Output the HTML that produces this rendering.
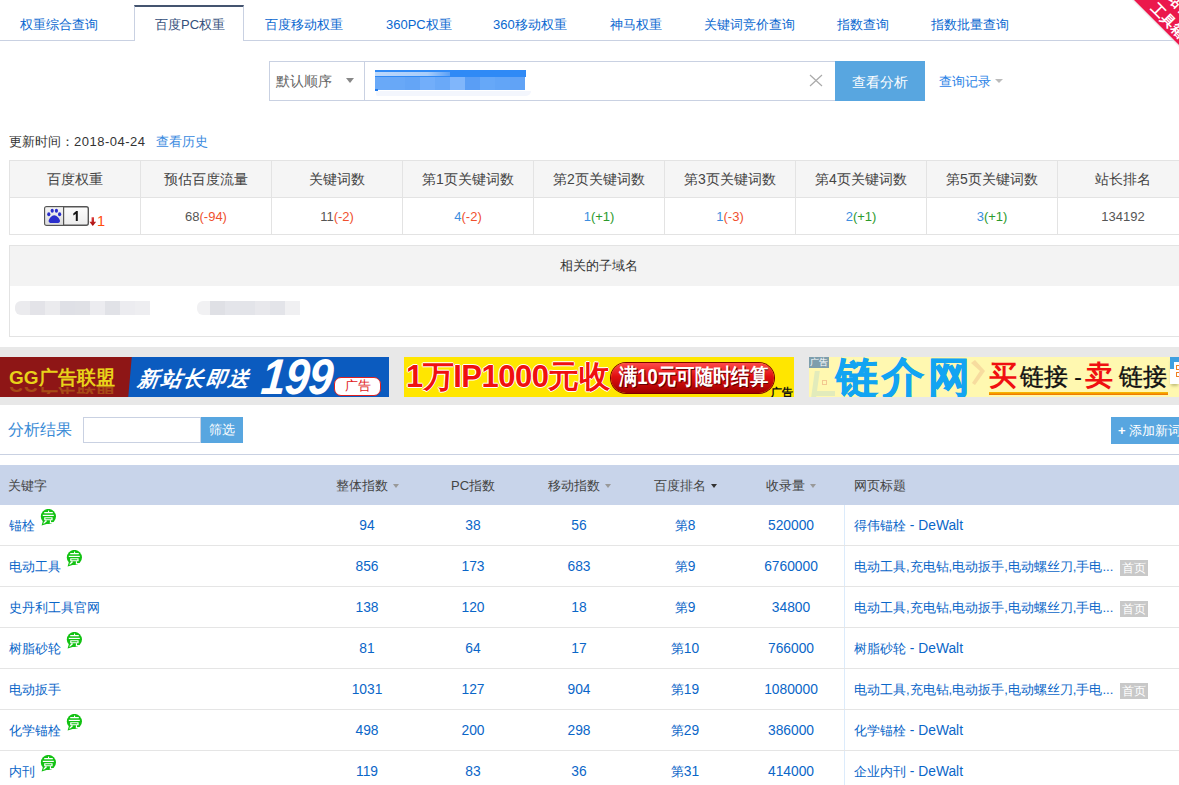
<!DOCTYPE html>
<html><head><meta charset="utf-8">
<style>
*{margin:0;padding:0;box-sizing:border-box}
html,body{width:1179px;height:785px;overflow:hidden;background:#fff}
body{font-family:"Liberation Sans",sans-serif;font-size:13px;color:#333;position:relative}
.a{position:absolute;white-space:nowrap}
.tabline{position:absolute;left:0;top:40px;width:1179px;height:1px;background:#c9d1e2}
.tab{position:absolute;top:16px;line-height:18px;font-size:13px;color:#0a68d0}
.acttab{position:absolute;left:134px;top:5px;width:110px;height:36px;background:#fff;border-left:1px solid #c9d1e2;border-right:1px solid #c9d1e2;border-top:2px solid #44546f}
.ribbon{position:absolute;left:1134px;top:0;width:45px;height:45px;overflow:hidden}
.sel{position:absolute;left:269px;top:61px;width:96px;height:40px;border:1px solid #c9d1e2;background:#fff}
.inp{position:absolute;left:364px;top:61px;width:472px;height:40px;border:1px solid #c9d1e2;background:#fff}
.btn{position:absolute;left:835px;top:61px;width:90px;height:40px;background:#58a6e0;color:#fff;font-size:14px;text-align:center;line-height:42px}
.t1{position:absolute;left:9px;top:160px;width:1180px;border-collapse:collapse;table-layout:fixed}
.t1 td{border:1px solid #e3e3e3;text-align:center;width:131px}
.t1 tr.h td{height:37px;background:#f5f5f5;font-size:14px;color:#444;padding-top:2px}
.t1 tr.b td{height:37px;font-size:13px;color:#555}
.blue{color:#3d8ee0}.red{color:#f0502e}.green{color:#2c9a2c}
.sub{position:absolute;left:9px;top:245px;width:1180px;height:92px;border:1px solid #e3e3e3}
.subh{height:40px;background:#f3f3f3;text-align:center;line-height:40px;font-size:13px;color:#333}
.strip{position:absolute;left:0;top:347px;width:1179px;height:58px;background:#e8e8e8}
.t2h{position:absolute;left:0;top:465px;width:1179px;height:40px;background:#c8d4ea}
.row{position:absolute;left:0;width:1179px;height:41px;border-bottom:1px solid #e5e5e5}
.cell{position:absolute;top:0;line-height:41px;text-align:center;color:#0a66c8;font-size:13px}
.n{font-size:13.8px}
.hc{position:absolute;top:1px;line-height:40px;text-align:center;color:#444;font-size:13px}
.arr{display:inline-block;width:0;height:0;border-left:3px solid transparent;border-right:3px solid transparent;border-top:4px solid #999;vertical-align:middle;margin-left:5px;margin-top:-2px}
.jing{position:absolute;margin-left:5px;margin-top:4px;width:17px;height:18px}
.shou{display:inline-block;background:#c8c8c8;color:#fff;font-size:12px;line-height:16px;padding:0 2px;margin-left:7px;vertical-align:middle}
</style></head><body>

<svg width="0" height="0" style="position:absolute"><defs><symbol id="jg" viewBox="0 0 17 18">
<circle cx="8.4" cy="7.5" r="7.6" fill="#12c212"/>
<path d="M3.2 11 L1.6 16.6 L11.5 13.6Z" fill="#12c212"/>
<g fill="#fff">
<rect x="8" y="1.6" width="1.1" height="1.4"/>
<rect x="4.2" y="3" width="8.6" height="1.3"/>
<rect x="2.8" y="5.8" width="11" height="1.2"/>
<path d="M4.2 8.2h8.4v3h-8.4z M5.4 9.2v1h6v-1z" fill-rule="evenodd"/>
<path d="M5.5 11.2h1.2v1.2l-2.4 2.2h-1.3z"/>
<rect x="9.9" y="11.2" width="1.1" height="2.8"/>
<rect x="9.9" y="13.1" width="3.9" height="1.1"/>
</g></symbol></defs></svg>
<!-- tabs -->
<div class="tabline"></div>
<div class="acttab"></div>
<div class="tab" style="left:20px">权重综合查询</div>
<div class="tab" style="left:155px;color:#35507c">百度PC权重</div>
<div class="tab" style="left:265px">百度移动权重</div>
<div class="tab" style="left:386px">360PC权重</div>
<div class="tab" style="left:493px">360移动权重</div>
<div class="tab" style="left:610px">神马权重</div>
<div class="tab" style="left:704px">关键词竞价查询</div>
<div class="tab" style="left:837px">指数查询</div>
<div class="tab" style="left:931px">指数批量查询</div>

<!-- ribbon -->
<svg class="a" style="left:1120px;top:0" width="59" height="60" viewBox="1120 0 59 60">
<polygon points="1133,-1 1180,46 1180,48 1131,-1" fill="#dde3e3" opacity=".6"/>
<polygon points="1134,0 1179,0 1179,45" fill="#eb184c"/>
<g font-family="Liberation Sans, sans-serif" font-size="14" font-weight="bold" fill="#fff" text-anchor="middle">
<text transform="translate(1168,20.5) rotate(45)" y="4.5">工具箱</text>
<text transform="translate(1180,6) rotate(45)" y="4.5">站长</text>
</g></svg>

<!-- search -->
<div class="sel"></div>
<div class="a" style="left:276px;top:72px;line-height:18px;font-size:14px;color:#666">默认顺序</div>
<div class="a" style="left:346px;top:78px;width:0;height:0;border-left:4px solid transparent;border-right:4px solid transparent;border-top:5px solid #888"></div>
<div class="inp"></div>
<div class="a" style="left:376px;top:91px;width:155px;height:5px;background:#f3f6fd;border-radius:0 0 6px 2px"></div>
<div class="a" style="left:375px;top:70px;width:151px;height:7px;background:#2f8af6"></div>
<div class="a" style="left:375px;top:72px;width:75px;height:4px;background:linear-gradient(90deg,#bcd8fb,#a9cdfa 70%,#5aa0f6)"></div>
<div class="a" style="left:375px;top:77px;width:15px;height:13px;background:#69a9f8"></div>
<div class="a" style="left:390px;top:77px;width:15px;height:13px;background:#68a8f7"></div>
<div class="a" style="left:405px;top:77px;width:15px;height:13px;background:#64a5f6"></div>
<div class="a" style="left:420px;top:77px;width:15px;height:13px;background:#72aefa"></div>
<div class="a" style="left:435px;top:77px;width:15px;height:13px;background:#6aa9f8"></div>
<div class="a" style="left:450px;top:77px;width:15px;height:13px;background:#80b6fb"></div>
<div class="a" style="left:465px;top:77px;width:15px;height:13px;background:#5a9ef5"></div>
<div class="a" style="left:480px;top:77px;width:15px;height:13px;background:#66a8f8"></div>
<div class="a" style="left:495px;top:77px;width:15px;height:13px;background:#62a5f7"></div>
<div class="a" style="left:510px;top:77px;width:15px;height:13px;background:#61a3f6"></div>
<div class="a" style="left:375px;top:89px;width:3px;height:2px;background:#1f7cf0"></div>

<svg class="a" style="left:809px;top:74px" width="14" height="13"><path d="M1 1L13 12M13 1L1 12" stroke="#aaa" stroke-width="1.2" fill="none"/></svg>
<div class="btn">查看分析</div>
<div class="a" style="left:939px;top:73px;line-height:18px;color:#2a82e6">查询记录</div>
<div class="a" style="left:995px;top:79px;width:0;height:0;border-left:4px solid transparent;border-right:4px solid transparent;border-top:4px solid #bbb"></div>

<!-- update -->
<div class="a" style="left:9px;top:133px;line-height:18px;color:#333">更新时间：<span style="letter-spacing:0.5px">2018-04-24</span></div>
<div class="a" style="left:156px;top:133px;line-height:18px;color:#3a8ae0">查看历史</div>

<table class="t1">
<tr class="h"><td>百度权重</td><td>预估百度流量</td><td>关键词数</td><td>第1页关键词数</td><td>第2页关键词数</td><td>第3页关键词数</td><td>第4页关键词数</td><td>第5页关键词数</td><td>站长排名</td></tr>
<tr class="b"><td></td><td>68<span class="red">(-94)</span></td><td>11<span class="red">(-2)</span></td><td><span class="blue">4</span><span class="red">(-2)</span></td><td><span class="blue">1</span><span class="green">(+1)</span></td><td><span class="blue">1</span><span class="red">(-3)</span></td><td><span class="blue">2</span><span class="green">(+1)</span></td><td><span class="blue">3</span><span class="green">(+1)</span></td><td>134192</td></tr>
</table>
<!-- baidu badge -->
<svg class="a" style="left:43px;top:205px" width="64" height="24" viewBox="43 205 64 24">
<defs><linearGradient id="bg1" x1="0" y1="0" x2="0" y2="1"><stop offset="0" stop-color="#f4f4f4"/><stop offset="1" stop-color="#dcdcdc"/></linearGradient>
<linearGradient id="bg2" x1="0" y1="0" x2="0" y2="1"><stop offset="0" stop-color="#fdfdfd"/><stop offset="1" stop-color="#ececec"/></linearGradient>
<linearGradient id="ar" x1="0" y1="0" x2="0" y2="1"><stop offset="0" stop-color="#e04040"/><stop offset="1" stop-color="#a00808"/></linearGradient></defs>
<rect x="44.7" y="206.7" width="43.6" height="18.6" rx="2" fill="url(#bg2)" stroke="#555" stroke-width="1.4"/>
<rect x="45.4" y="207.4" width="18" height="17.2" fill="url(#bg1)"/>
<line x1="63.6" y1="207" x2="63.6" y2="225" stroke="#555" stroke-width="1.2"/>
<g fill="#2b2fcc">
<ellipse cx="48.8" cy="214.3" rx="1.6" ry="2"/>
<ellipse cx="52.2" cy="210.8" rx="1.6" ry="2"/>
<ellipse cx="56.4" cy="210.8" rx="1.6" ry="2"/>
<ellipse cx="59.6" cy="214.3" rx="1.6" ry="2"/>
<path d="M54.2 215.3 C52 215.3 48.6 219 48.6 221 C48.6 222.6 50 223 51 223 L57.6 223 C58.6 223 60 222.6 60 221 C60 219 56.6 215.3 54.2 215.3Z"/>
</g>
<path d="M73.3 213.6 L76.2 211 H77.8 V221 H75.8 V213.9 L73.3 215.6Z" fill="#151515"/>
<path d="M91.6 217.2 h2.4 v4.6 h2.2 l-3.4 4.2 l-3.4 -4.2 h2.2z" fill="url(#ar)"/>
<text x="97" y="226" font-family="Liberation Sans, sans-serif" font-size="14.5" fill="#ff4a0a">1</text>
</svg>

<div class="sub"><div class="subh">相关的子域名</div></div>
<div class="a" style="left:15px;top:301px;width:15px;height:14px;background:#ebebee;border-radius:6px 0 0 6px;"></div>
<div class="a" style="left:30px;top:301px;width:15px;height:14px;background:#e3e3e8;"></div>
<div class="a" style="left:45px;top:301px;width:15px;height:14px;background:#ebebee;"></div>
<div class="a" style="left:60px;top:301px;width:15px;height:14px;background:#dfe0e6;"></div>
<div class="a" style="left:75px;top:301px;width:15px;height:14px;background:#e0e1e6;"></div>
<div class="a" style="left:90px;top:301px;width:15px;height:14px;background:#ececf0;"></div>
<div class="a" style="left:105px;top:301px;width:15px;height:14px;background:#e1e2e7;"></div>
<div class="a" style="left:120px;top:301px;width:15px;height:14px;background:#ececf0;"></div>
<div class="a" style="left:135px;top:301px;width:15px;height:14px;background:#eeeef1;"></div>
<div class="a" style="left:197px;top:301px;width:13px;height:14px;background:#f1f1f3;border-radius:6px 0 0 6px;"></div>
<div class="a" style="left:210px;top:301px;width:15px;height:14px;background:#dfe0e5;"></div>
<div class="a" style="left:225px;top:301px;width:15px;height:14px;background:#e4e5ea;"></div>
<div class="a" style="left:240px;top:301px;width:15px;height:14px;background:#e3e4e9;"></div>
<div class="a" style="left:255px;top:301px;width:15px;height:14px;background:#e8e8ec;"></div>
<div class="a" style="left:270px;top:301px;width:15px;height:14px;background:#e3e4e9;"></div>
<div class="a" style="left:285px;top:301px;width:15px;height:14px;background:#f0f0f2;"></div>


<!-- banners -->
<div class="strip"></div>
<div class="a" style="left:0;top:357px;width:389px;height:40px;background:#0b5bbf;overflow:hidden">
 <div class="a" style="left:-10px;top:0;width:140px;height:40px;background:#8e1616;transform:skewX(-5deg)"></div>
 <div class="a" style="left:9px;top:10px;font-size:19px;line-height:22px;font-weight:900;color:#e8d21a;letter-spacing:0px">GG广告联盟</div>
 <div class="a" style="left:9px;top:30px;width:105px;height:7px;overflow:hidden;opacity:.28"><div style="position:absolute;left:0;top:-13px;font-size:19px;line-height:22px;font-weight:bold;color:#e8d21a;transform:scaleY(-1)">GG广告联盟</div></div>
 <div class="a" style="left:138px;top:10px;font-size:21px;line-height:24px;font-weight:900;font-style:italic;color:#fff;letter-spacing:1.5px;transform:skewX(-8deg)">新站长即送</div>
 <div class="a" style="left:264px;top:-5px;font-size:50px;line-height:50px;font-weight:bold;font-style:italic;color:#fff;transform:scaleX(0.88) skewX(-6deg);transform-origin:0 0;letter-spacing:-1px">199</div>
 <div class="a" style="left:334px;top:20px;width:47px;height:19px;background:#fff;border:1.5px solid #e02020;border-radius:7px;color:#e02020;font-size:13px;line-height:16px;text-align:center">广告</div>
</div>
<div class="a" style="left:404px;top:357px;width:390px;height:40px;background:#ffe600;overflow:hidden">
 <div class="a" style="left:2px;top:2px;font-size:31px;line-height:36px;font-weight:bold;color:#f01010;letter-spacing:-0.5px;-webkit-text-stroke:0px;text-shadow:1px 0 #fff,-1px 0 #fff,0 1px #fff,0 -1px #fff">1万IP1000元收</div>
 <div class="a" style="left:207px;top:5.5px;width:163px;height:30px;border-radius:15px;background:linear-gradient(#ff4a4a,#e01010 45%,#a00000);box-shadow:0 0 0 1px #7a0000"></div>
 <div class="a" style="left:215px;top:7px;font-size:22px;line-height:26px;font-weight:bold;color:#fff;text-shadow:1px 1px #600;transform:scaleX(0.835);transform-origin:0 0">满10元可随时结算</div>
 <div class="a" style="left:367px;top:29px;font-size:11px;line-height:12px;font-weight:bold;color:#111">广告</div>
</div>
<div class="a" style="left:809px;top:357px;width:370px;height:40px;background:#fff8b0;overflow:hidden">
 <div class="a" style="left:4px;top:14px;width:5px;height:26px;background:#e2ebbb;transform:skewX(-8deg)"></div>
 <div class="a" style="left:4px;top:34px;width:22px;height:5px;background:#e2ebbb"></div>
 <div class="a" style="left:13px;top:23px;width:5px;height:5px;border:1px solid #f3c890"></div>
 <svg class="a" style="left:160px;top:2px" width="18" height="28"><path d="M2 4 L6 1 L16 12 L6 26 L3 24 L11 12Z" fill="#f5d49a" opacity=".8"/></svg>
 <div class="a" style="left:0;top:0;width:20px;height:11px;background:#7e9eac;color:#fff;font-size:9px;line-height:11px;text-align:center">广告</div>
 <div class="a" style="left:27px;top:-1px;font-size:42px;line-height:44px;font-weight:900;color:#12a4f2;letter-spacing:4px;-webkit-text-stroke:0.8px #12a4f2">链介网</div>
 <div class="a" style="left:180px;top:3px;font-size:28px;line-height:32px;font-weight:bold;color:#f01010">买</div>
 <div class="a" style="left:211px;top:5px;font-size:24px;line-height:30px;color:#111;-webkit-text-stroke:0.4px #111">链接</div>
 <div class="a" style="left:265px;top:5px;font-size:24px;line-height:30px;color:#111">-</div>
 <div class="a" style="left:276px;top:3px;font-size:28px;line-height:32px;font-weight:bold;color:#f01010">卖</div>
 <div class="a" style="left:310px;top:5px;font-size:24px;line-height:30px;color:#111;-webkit-text-stroke:0.4px #111">链接</div>
 <div class="a" style="left:180px;top:35px;width:179px;height:3px;background:linear-gradient(#f8c000,#f07000)"></div>
</div>
<div class="a" style="left:1170px;top:357px;width:9px;height:27px;background:#fff;border-top:5px solid #3fa0e0;box-shadow:0 3px 3px -1px rgba(120,120,60,.45)"></div><div class="a" style="left:1170px;top:357px;width:4px;height:12px;background:#3fa0e0"></div><div class="a" style="left:1176px;top:365px;width:5px;height:5px;border:1.5px solid #f08020"></div><div class="a" style="left:1176px;top:372px;width:5px;height:5px;border:1.5px solid #f08020"></div>
<!-- analysis -->
<div class="a" style="left:8px;top:420px;line-height:20px;font-size:16px;color:#3a8bd6">分析结果</div>
<div class="a" style="left:83px;top:417px;width:118px;height:26px;border:1px solid #c9d1e2"></div>
<div class="a" style="left:201px;top:417px;width:42px;height:26px;background:#58a6e0;color:#fff;font-size:13px;line-height:26px;text-align:center">筛选</div>
<div class="a" style="left:1111px;top:417px;width:80px;height:27px;background:#58a6e0;color:#fff;font-size:13px;line-height:27px;padding-left:7px"><b>+</b> 添加新词</div>
<div class="a" style="left:0;top:454px;width:1179px;height:1px;background:#c9d1e2"></div>

<!-- table 2 -->
<div class="t2h">
<div class="hc" style="left:8px;text-align:left">关键字</div>
<div class="hc" style="left:314px;width:106px">整体指数<i class="arr"></i></div>
<div class="hc" style="left:420px;width:106px">PC指数</div>
<div class="hc" style="left:526px;width:106px">移动指数<i class="arr"></i></div>
<div class="hc" style="left:632px;width:106px">百度排名<i class="arr" style="border-top-color:#333"></i></div>
<div class="hc" style="left:738px;width:106px">收录量<i class="arr"></i></div>
<div class="hc" style="left:854px;text-align:left">网页标题</div>
</div>
<div class="a" style="left:844px;top:505px;width:1px;height:280px;background:#dcebfb"></div>

<div id="rows">
<div class="row" style="top:505px"><div class="cell" style="left:9px;text-align:left">锚栓<svg class="jing"><use href="#jg"/></svg></div><div class="cell n" style="left:314px;width:106px">94</div><div class="cell n" style="left:420px;width:106px">38</div><div class="cell n" style="left:526px;width:106px">56</div><div class="cell" style="left:632px;width:106px">第<span class="n">8</span></div><div class="cell n" style="left:738px;width:106px">520000</div><div class="cell" style="left:854px;text-align:left">得伟锚栓<span class="n"> - DeWalt</span></div></div>
<div class="row" style="top:546px"><div class="cell" style="left:9px;text-align:left">电动工具<svg class="jing"><use href="#jg"/></svg></div><div class="cell n" style="left:314px;width:106px">856</div><div class="cell n" style="left:420px;width:106px">173</div><div class="cell n" style="left:526px;width:106px">683</div><div class="cell" style="left:632px;width:106px">第<span class="n">9</span></div><div class="cell n" style="left:738px;width:106px">6760000</div><div class="cell" style="left:854px;text-align:left">电动工具,充电钻,电动扳手,电动螺丝刀,手电...<span class="shou">首页</span></div></div>
<div class="row" style="top:587px"><div class="cell" style="left:9px;text-align:left">史丹利工具官网</div><div class="cell n" style="left:314px;width:106px">138</div><div class="cell n" style="left:420px;width:106px">120</div><div class="cell n" style="left:526px;width:106px">18</div><div class="cell" style="left:632px;width:106px">第<span class="n">9</span></div><div class="cell n" style="left:738px;width:106px">34800</div><div class="cell" style="left:854px;text-align:left">电动工具,充电钻,电动扳手,电动螺丝刀,手电...<span class="shou">首页</span></div></div>
<div class="row" style="top:628px"><div class="cell" style="left:9px;text-align:left">树脂砂轮<svg class="jing"><use href="#jg"/></svg></div><div class="cell n" style="left:314px;width:106px">81</div><div class="cell n" style="left:420px;width:106px">64</div><div class="cell n" style="left:526px;width:106px">17</div><div class="cell" style="left:632px;width:106px">第<span class="n">10</span></div><div class="cell n" style="left:738px;width:106px">766000</div><div class="cell" style="left:854px;text-align:left">树脂砂轮<span class="n"> - DeWalt</span></div></div>
<div class="row" style="top:669px"><div class="cell" style="left:9px;text-align:left">电动扳手</div><div class="cell n" style="left:314px;width:106px">1031</div><div class="cell n" style="left:420px;width:106px">127</div><div class="cell n" style="left:526px;width:106px">904</div><div class="cell" style="left:632px;width:106px">第<span class="n">19</span></div><div class="cell n" style="left:738px;width:106px">1080000</div><div class="cell" style="left:854px;text-align:left">电动工具,充电钻,电动扳手,电动螺丝刀,手电...<span class="shou">首页</span></div></div>
<div class="row" style="top:710px"><div class="cell" style="left:9px;text-align:left">化学锚栓<svg class="jing"><use href="#jg"/></svg></div><div class="cell n" style="left:314px;width:106px">498</div><div class="cell n" style="left:420px;width:106px">200</div><div class="cell n" style="left:526px;width:106px">298</div><div class="cell" style="left:632px;width:106px">第<span class="n">29</span></div><div class="cell n" style="left:738px;width:106px">386000</div><div class="cell" style="left:854px;text-align:left">化学锚栓<span class="n"> - DeWalt</span></div></div>
<div class="row" style="top:751px"><div class="cell" style="left:9px;text-align:left">内刊<svg class="jing"><use href="#jg"/></svg></div><div class="cell n" style="left:314px;width:106px">119</div><div class="cell n" style="left:420px;width:106px">83</div><div class="cell n" style="left:526px;width:106px">36</div><div class="cell" style="left:632px;width:106px">第<span class="n">31</span></div><div class="cell n" style="left:738px;width:106px">414000</div><div class="cell" style="left:854px;text-align:left">企业内刊<span class="n"> - DeWalt</span></div></div>
</div>
</body></html>
